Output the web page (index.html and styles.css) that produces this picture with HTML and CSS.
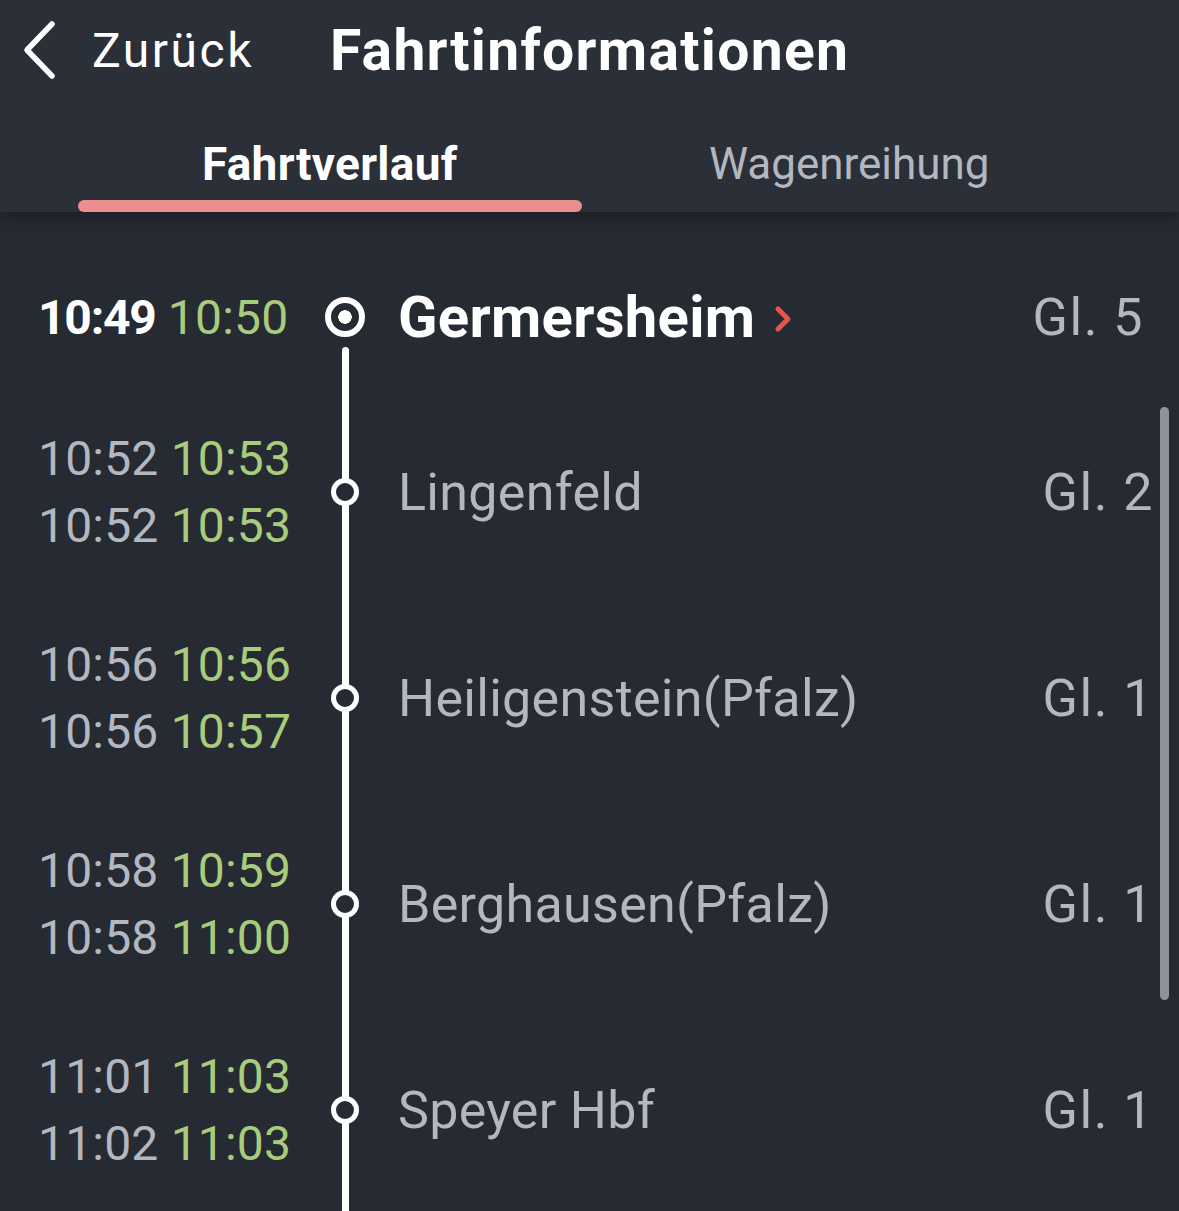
FILE: index.html
```html
<!DOCTYPE html>
<html lang="de">
<head>
    <meta charset="UTF-8">
    <meta name="viewport" content="width=device-width, initial-scale=1.0">
    <title>Fahrtinformationen</title>
    <link rel="stylesheet" href="styles.css">
</head>
<body>
    <header>
        <div class="top-bar">
            <button class="back-button">
                <svg width="34" height="60" viewBox="0 0 34 60"><polyline points="30,4 5,30 30,56" fill="none" stroke="#fff" stroke-width="5.5" stroke-linecap="round" stroke-linejoin="round"/></svg>
                <span>Zurück</span>
            </button>
            <h1>Fahrtinformationen</h1>
        </div>
        <nav class="tabs">
            <div class="tab active"><span>Fahrtverlauf</span><i class="indicator"></i></div>
            <div class="tab"><span>Wagenreihung</span><i class="indicator"></i></div>
        </nav>
    </header>

    <section class="stops">
        <div class="stop first">
            <div class="times">
                <div><b class="planned">10:49</b> <span class="real">10:50</span></div>
            </div>
            <div class="track">
                <span class="dot"></span>
                <span class="line"></span>
            </div>
            <div class="name">Germersheim
                <svg class="more" width="20" height="28" viewBox="0 0 20 28"><polyline points="5,4 15,14 5,24" fill="none" stroke="#e0574e" stroke-width="5" stroke-linecap="round" stroke-linejoin="round"/></svg>
            </div>
            <div class="platform">Gl. 5</div>
        </div>

        <div class="stop">
            <div class="times">
                <div>10:52 <span class="real">10:53</span></div>
                <div>10:52 <span class="real">10:53</span></div>
            </div>
            <div class="track"><span class="dot"></span></div>
            <div class="name">Lingenfeld</div>
            <div class="platform">Gl. 2</div>
        </div>

        <div class="stop">
            <div class="times">
                <div>10:56 <span class="real">10:56</span></div>
                <div>10:56 <span class="real">10:57</span></div>
            </div>
            <div class="track"><span class="dot"></span></div>
            <div class="name">Heiligenstein(Pfalz)</div>
            <div class="platform">Gl. 1</div>
        </div>

        <div class="stop">
            <div class="times">
                <div>10:58 <span class="real">10:59</span></div>
                <div>10:58 <span class="real">11:00</span></div>
            </div>
            <div class="track"><span class="dot"></span></div>
            <div class="name">Berghausen(Pfalz)</div>
            <div class="platform">Gl. 1</div>
        </div>

        <div class="stop">
            <div class="times">
                <div>11:01 <span class="real">11:03</span></div>
                <div>11:02 <span class="real">11:03</span></div>
            </div>
            <div class="track"><span class="dot"></span></div>
            <div class="name">Speyer Hbf</div>
            <div class="platform">Gl. 1</div>
        </div>

        <div class="scrollbar"></div>
    </section>
</body>
</html>
```

FILE: styles.css
```css
body {
    font-family: Roboto, 'Noto Sans', sans-serif;
    margin: 0;
    padding: 0;
    background: #262a33;
    color: #b3b7c0;
    height: 1211px;
    overflow: hidden;
}
header {
    background: #2b2f38;
    box-shadow: 0 6px 14px rgba(0, 0, 0, 0.28);
    position: relative;
    z-index: 1;
}
.top-bar {
    height: 100px;
    display: flex;
    align-items: center;
    padding-left: 22px;
}
.back-button {
    background: none;
    border: none;
    padding: 0;
    color: white;
    display: flex;
    align-items: center;
    gap: 36px;
    font-family: inherit;
    font-size: 48px;
    letter-spacing: 2.5px;
    cursor: pointer;
}
.back-button svg {
    display: block;
}
h1 {
    margin: 0 0 0 76px;
    color: white;
    font-size: 57px;
    font-weight: 700;
    letter-spacing: 1.3px;
}
.tabs {
    height: 112px;
    display: flex;
    gap: 16px;
    padding: 0 78px;
}
.tab {
    flex: 1;
    display: flex;
    flex-direction: column;
    align-items: center;
    justify-content: flex-end;
    font-size: 44px;
    color: #b3b7c0;
}
.tab span {
    line-height: 48px;
    margin-bottom: 12px;
}
.tab .indicator {
    display: block;
    width: 100%;
    height: 12px;
    border-radius: 6px;
}
.tab.active {
    color: white;
    font-weight: 700;
    font-size: 46px;
    letter-spacing: 0.3px;
}
.tab.active .indicator {
    background: #ea8f8e;
}
.stops {
    padding-top: 33px;
    position: relative;
}
.stop {
    display: flex;
    height: 206px;
    padding-left: 38px;
}
.stop.first {
    height: 144px;
}
.times {
    width: 262px;
    display: flex;
    flex-direction: column;
    justify-content: center;
    font-size: 48px;
    line-height: 67px;
    letter-spacing: 0.2px;
    white-space: nowrap;
}
.planned {
    color: white;
    font-weight: 700;
    letter-spacing: -1.2px;
}
.real {
    color: #a8cb7c;
}
.track {
    width: 90px;
    display: flex;
    flex-direction: column;
    align-items: center;
    justify-content: center;
    background: linear-gradient(#fff, #fff) center / 7px 100% no-repeat;
}
.dot {
    width: 18px;
    height: 18px;
    border: 5px solid white;
    border-radius: 50%;
    background: #262a33;
}
.first .track {
    background: none;
    justify-content: flex-start;
    padding-top: 52px;
}
.first .dot {
    width: 28px;
    height: 28px;
    border-width: 6px;
    background: radial-gradient(circle, #fff 0 6.5px, #262a33 7px);
}
.first .line {
    flex: 1;
    width: 7px;
    margin-top: 10px;
    background: white;
    border-radius: 4px 4px 0 0;
}
.name {
    flex: 1;
    display: flex;
    align-items: center;
    padding-left: 8px;
    font-size: 52px;
    letter-spacing: 0.3px;
}
.first .name {
    color: white;
    font-weight: 700;
    font-size: 58px;
    letter-spacing: 0.3px;
}
.more {
    margin-left: 18px;
    margin-top: 4px;
}
.platform {
    display: flex;
    align-items: center;
    padding-right: 25px;
    font-size: 52px;
    letter-spacing: 1.5px;
}
.first .platform {
    padding-right: 35px;
}
.scrollbar {
    position: absolute;
    right: 10px;
    top: 195px;
    width: 9px;
    height: 593px;
    border-radius: 5px;
    background: #8f929a;
}
```
